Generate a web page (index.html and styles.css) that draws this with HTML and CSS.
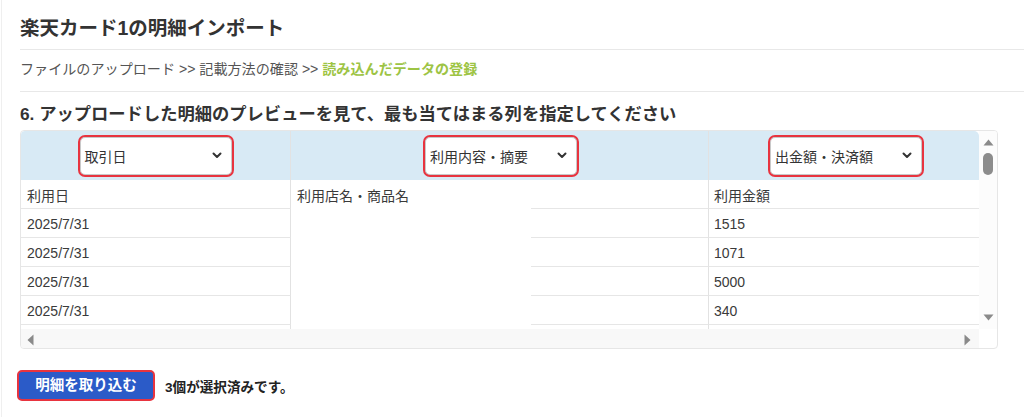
FILE: index.html
```html
<!DOCTYPE html>
<html lang="ja">
<head>
<meta charset="utf-8">
<title>楽天カード1の明細インポート</title>
<link rel="stylesheet" href="styles.css">
</head>
<body>
<div class="page">
  <h1 class="title">楽天カード1の明細インポート</h1>
  <div class="crumbs">ファイルのアップロード &gt;&gt; 記載方法の確認 &gt;&gt; <strong class="current">読み込んだデータの登録</strong></div>
  <h2 class="step">6. アップロードした明細のプレビューを見て、最も当てはまる列を指定してください</h2>

  <div class="preview">
    <div class="preview-main">
      <div class="grid">
        <div class="hcell col-a">
          <div class="select"><span>取引日</span><svg class="chev" width="10" height="7" viewBox="0 0 10 7"><path d="M1.5 1.5l3.5 3.5 3.5-3.5" fill="none" stroke="#333" stroke-width="2" stroke-linecap="round" stroke-linejoin="round"/></svg></div>
        </div>
        <div class="hcell col-bc">
          <div class="select"><span>利用内容・摘要</span><svg class="chev" width="10" height="7" viewBox="0 0 10 7"><path d="M1.5 1.5l3.5 3.5 3.5-3.5" fill="none" stroke="#333" stroke-width="2" stroke-linecap="round" stroke-linejoin="round"/></svg></div>
        </div>
        <div class="hcell col-d">
          <div class="select"><span>出金額・決済額</span><svg class="chev" width="10" height="7" viewBox="0 0 10 7"><path d="M1.5 1.5l3.5 3.5 3.5-3.5" fill="none" stroke="#333" stroke-width="2" stroke-linecap="round" stroke-linejoin="round"/></svg></div>
        </div>

        <div class="cell a">利用日</div>
        <div class="cell b">利用店名・商品名</div>
        <div class="cell c"></div>
        <div class="cell d">利用金額</div>

        <div class="cell a">2025/7/31</div>
        <div class="cell c"></div>
        <div class="cell d">1515</div>

        <div class="cell a">2025/7/31</div>
        <div class="cell c"></div>
        <div class="cell d">1071</div>

        <div class="cell a">2025/7/31</div>
        <div class="cell c"></div>
        <div class="cell d">5000</div>

        <div class="cell a">2025/7/31</div>
        <div class="cell c"></div>
        <div class="cell d">340</div>

        <div class="cell a"></div>
        <div class="cell c"></div>
        <div class="cell d"></div>
      </div>
      <div class="vscroll">
        <svg width="11" height="7" viewBox="0 0 11 7"><path d="M5.5 0.5L10.5 6.5H0.5z" fill="#8a8a8a"/></svg>
        <div class="thumb"></div>
        <div class="vspacer"></div>
        <svg width="11" height="7" viewBox="0 0 11 7"><path d="M0.5 0.5H10.5L5.5 6.5z" fill="#8a8a8a"/></svg>
      </div>
    </div>
    <div class="hscroll">
      <svg width="7" height="12" viewBox="0 0 7 12"><path d="M6.5 0.5V11.5L0.5 6z" fill="#8a8a8a"/></svg>
      <svg width="7" height="12" viewBox="0 0 7 12"><path d="M0.5 0.5V11.5L6.5 6z" fill="#8a8a8a"/></svg>
    </div>
  </div>

  <div class="actions">
    <button class="import-btn" type="button">明細を取り込む</button>
    <span class="count">3個が選択済みです。</span>
  </div>
</div>
</body>
</html>
```

FILE: styles.css
```css
* { box-sizing: border-box; }

html, body {
  margin: 0;
  padding: 0;
  background: #fff;
}

body {
  font-family: "Liberation Sans", "Noto Sans CJK JP", sans-serif;
  color: #333;
  height: 417px;
  overflow: hidden;
}

.page {
  margin-left: 1px;
  border-left: 1px solid #efefef;
  padding-left: 18px;
  height: 417px;
}

.title {
  margin: 0;
  padding: 14px 0 7px;
  font-size: 19.5px;
  line-height: 28px;
  font-weight: bold;
  color: #333;
  border-bottom: 1px solid #e8e8e8;
}

.crumbs {
  padding: 9px 0 12px;
  font-size: 14.1px;
  line-height: 20px;
  color: #555;
  border-bottom: 1px solid #e8e8e8;
}

.crumbs .current {
  color: #9dc444;
  font-weight: bold;
}

.step {
  margin: 12px 0 6px;
  font-size: 17.3px;
  line-height: 20px;
  font-weight: bold;
  color: #333;
}

.preview {
  width: 978px;
  border: 1px solid #e6e6e6;
  border-radius: 4px;
  overflow: hidden;
}

.preview-main {
  display: flex;
}

.grid {
  display: grid;
  grid-template-columns: 270px 240px 178px 270px;
  grid-template-rows: 49px;
  grid-auto-rows: 29px;
  height: 198px;
  overflow: hidden;
  border-top-left-radius: 4px;
}

.hcell {
  background: #d8eaf5;
  display: flex;
  align-items: center;
  justify-content: center;
}

.col-a { border-right: 1px solid #e2e2e2; }
.col-bc { grid-column: span 2; border-right: 1px solid #e2e2e2; padding-left: 3px; }
.col-d { border-top-right-radius: 5px; padding-left: 4px; }

.select {
  width: 152px;
  height: 38px;
  background: #fff;
  border: 1px solid #c9c9c9;
  outline: 2px solid #e8343f;
  border-radius: 5px;
  display: flex;
  align-items: center;
  justify-content: space-between;
  padding: 0 9px 0 4px;
  font-size: 14px;
  color: #333;
}

.chev { display: block; }

.cell {
  font-size: 14px;
  color: #3a3a3a;
  display: flex;
  align-items: center;
  padding: 1px 6px 0;
  border-bottom: 1px solid #e6e6e6;
}

.cell.a { grid-column: 1; border-right: 1px solid #e2e2e2; }
.cell.b {
  grid-column: 2;
  grid-row: 2 / span 7;
  border-bottom: 0;
  align-items: flex-start;
  padding-top: 5px;
}
.cell.c { grid-column: 3; border-right: 1px solid #e2e2e2; }
.cell.d { grid-column: 4; padding-left: 5px; }

.vscroll {
  width: 18px;
  height: 198px;
  background: #fcfcfc;
  display: flex;
  flex-direction: column;
  align-items: center;
  padding: 8px 0 8px;
}

.vscroll svg { display: block; flex: none; }

.thumb {
  width: 10px;
  height: 22px;
  margin-top: 7px;
  background: #8c8c8c;
  border-radius: 5px;
}

.vspacer { flex: 1; }

.hscroll {
  height: 19px;
  background: #f8f8f8;
  display: flex;
  align-items: center;
  justify-content: space-between;
  padding: 2px 8px 0 6px;
  width: 958px;
}

.hscroll svg { display: block; }

.actions {
  margin-top: 21px;
  margin-left: -3px;
  display: flex;
  align-items: center;
  gap: 10px;
}

.import-btn {
  width: 138px;
  height: 31px;
  background: #2b5bc8;
  border: 2px solid #e8343f;
  border-radius: 5px;
  color: #fff;
  font-family: "Liberation Sans", "Noto Sans CJK JP", sans-serif;
  font-size: 14.5px;
  font-weight: bold;
  padding: 0;
  line-height: 1;
}

.count {
  font-size: 13.6px;
  font-weight: bold;
  color: #222;
}
```
